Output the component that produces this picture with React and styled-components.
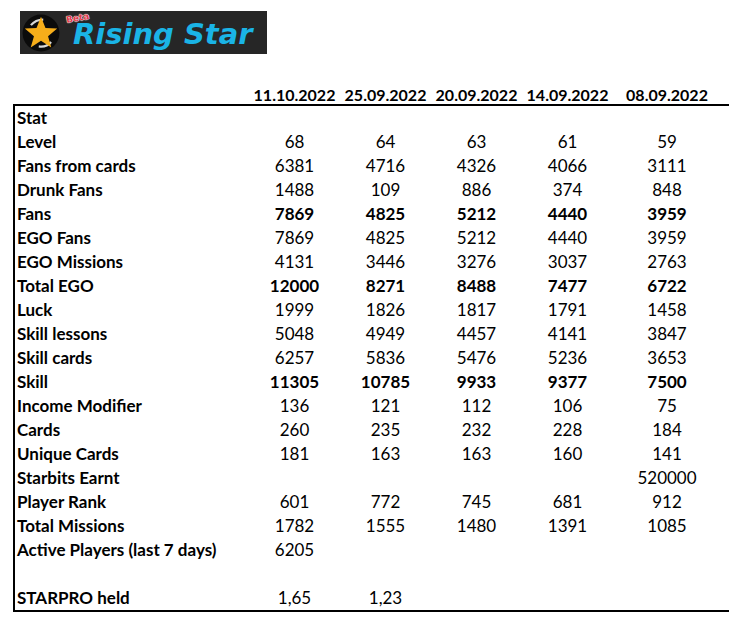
import React from 'react'
import styled, { createGlobalStyle } from 'styled-components'

const GlobalStyle = createGlobalStyle`
    body {
        margin: 0;
        background: #ffffff;
        font-family: Lato, "Liberation Sans", sans-serif;
        color: #000000;
    }
`

const Page = styled.div`
    width: 729px;
    height: 627px;
    overflow: hidden;
    padding-top: 11px;
    box-sizing: border-box;
`

const Logo = styled.div`
    margin-left: 20px;
    width: 247px;
    height: 43px;
    background: #262626;
    display: flex;
    align-items: center;
    position: relative;
    padding-left: 2px;
    box-sizing: border-box;
`

const LogoText = styled.span`
    font-family: "DejaVu Sans", sans-serif;
    font-style: italic;
    font-weight: 700;
    font-size: 29px;
    color: #1ab4e6;
    margin-left: 13px;
    letter-spacing: 0px;
    line-height: 1;
    padding-top: 3px;
    white-space: nowrap;
`

const Beta = styled.span`
    position: absolute;
    left: 46px;
    top: 2px;
    font-family: "DejaVu Sans", sans-serif;
    font-size: 9px;
    font-weight: 700;
    color: #e0394a;
    transform: rotate(-10deg);
    text-shadow: 0 0 1px #fff, 0 0 1px #fff, 0 0 1px #fff;
`

const Dates = styled.div`
    display: grid;
    grid-template-columns: 236px 91px 91px 91px 91px 108px;
    margin: 30px 0 0 13px;
    height: 20px;
    align-items: center;
`

const DateCell = styled.div`
    text-align: center;
    font-weight: 700;
    font-size: 16px;
`

const Table = styled.div`
    margin-left: 13px;
    width: 716px;
    border-top: 2px solid #000;
    border-left: 2px solid #000;
    border-bottom: 2px solid #000;
`

const Row = styled.div`
    display: grid;
    grid-template-columns: 234px 91px 91px 91px 91px 108px;
    height: 24px;
    align-items: center;
    font-size: 17px;
    line-height: 22px;
`

const Label = styled.div`
    font-weight: 700;
    padding-left: 2px;
    white-space: nowrap;
`

const Value = styled.div`
    text-align: center;
    font-weight: ${p => (p.$bold ? 700 : 400)};
`

const dates = ['11.10.2022', '25.09.2022', '20.09.2022', '14.09.2022', '08.09.2022']

const rows = [
    ['Stat', []],
    ['Level', ['68', '64', '63', '61', '59']],
    ['Fans from cards', ['6381', '4716', '4326', '4066', '3111']],
    ['Drunk Fans', ['1488', '109', '886', '374', '848']],
    ['Fans', ['7869', '4825', '5212', '4440', '3959'], true],
    ['EGO Fans', ['7869', '4825', '5212', '4440', '3959']],
    ['EGO Missions', ['4131', '3446', '3276', '3037', '2763']],
    ['Total EGO', ['12000', '8271', '8488', '7477', '6722'], true],
    ['Luck', ['1999', '1826', '1817', '1791', '1458']],
    ['Skill lessons', ['5048', '4949', '4457', '4141', '3847']],
    ['Skill cards', ['6257', '5836', '5476', '5236', '3653']],
    ['Skill', ['11305', '10785', '9933', '9377', '7500'], true],
    ['Income Modifier', ['136', '121', '112', '106', '75']],
    ['Cards', ['260', '235', '232', '228', '184']],
    ['Unique Cards', ['181', '163', '163', '160', '141']],
    ['Starbits Earnt', ['', '', '', '', '520000']],
    ['Player Rank', ['601', '772', '745', '681', '912']],
    ['Total Missions', ['1782', '1555', '1480', '1391', '1085']],
    ['Active Players (last 7 days)', ['6205']],
    ['', []],
    ['STARPRO held', ['1,65', '1,23']],
]

function StarBadge() {
    return (
        <svg width="38" height="38" viewBox="0 0 34 34">
            <circle cx="17" cy="17" r="16.5" fill="#0b0b0b" />
            <path d="M8 10 Q12 5 19 5" stroke="#d8d8d8" strokeWidth="2" fill="none" />
            <path d="M15 29 Q22 30 26 25" stroke="#d8d8d8" strokeWidth="2" fill="none" />
            <polygon
                points="17,2.5 21,12.5 31.5,13 23.3,19.8 26.2,30 17,24 7.8,30 10.7,19.8 2.5,13 13,12.5"
                fill="#f7ae1a"
            />
        </svg>
    )
}

export default function App() {
    return (
        <Page>
            <GlobalStyle />
            <Logo>
                <StarBadge />
                <Beta>Beta</Beta>
                <LogoText>Rising Star</LogoText>
            </Logo>
            <Dates>
                <div />
                {dates.map(d => (
                    <DateCell key={d}>{d}</DateCell>
                ))}
            </Dates>
            <Table>
                {rows.map(([label, values, bold], i) => (
                    <Row key={i}>
                        <Label>{label}</Label>
                        {values.map((v, j) => (
                            <Value key={j} $bold={bold}>{v}</Value>
                        ))}
                    </Row>
                ))}
            </Table>
        </Page>
    )
}
